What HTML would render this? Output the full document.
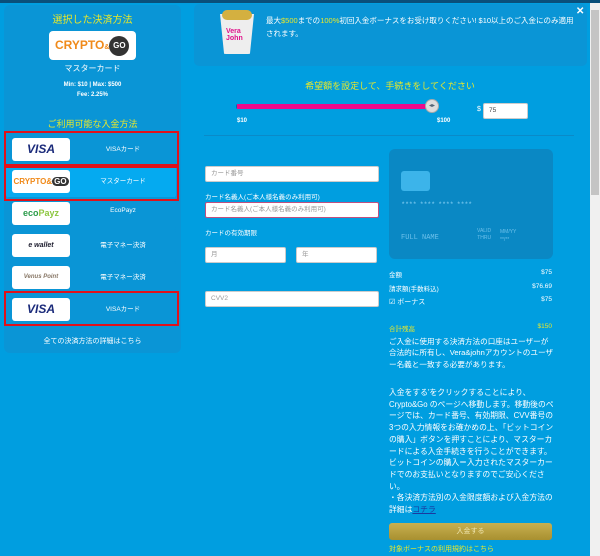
<!DOCTYPE html>
<html><head><meta charset="utf-8"><style>
*{margin:0;padding:0;box-sizing:border-box}
body{width:600px;height:556px;background:#009ee0;font-family:"Liberation Sans","Noto Sans CJK JP",sans-serif;color:#fff;position:relative;overflow:hidden;font-size:7px}
.a{position:absolute}
.top{left:0;top:0;width:600px;height:3px;background:#0a4f7a}
.left{left:4px;top:5px;width:177px;height:348px;background:#0a95d6;border-radius:6px}
.y{color:#e8e82a}
.row{position:absolute;left:6px;width:170px;height:33px;background:#0a95d6;border-radius:3px}
.logo{position:absolute;left:6px;top:5px;width:58px;height:23px;background:#fff;border-radius:3px;font-weight:bold;text-align:center;line-height:23px}
.rl{position:absolute;left:72px;width:90px;text-align:center;top:10px;font-size:6.5px}
.red{position:absolute;border:2px solid #e0111a}
.inp{position:absolute;background:#fff;border:1px solid #ccc;border-radius:2px;height:16px;color:#999;font-size:6.5px;padding-left:5px;line-height:14px}
.lbl{position:absolute;font-size:6.5px}
.sb{left:590px;top:3px;width:10px;height:553px;background:#f0f0f0}
.p{position:absolute;left:389px;width:166px;font-size:7.6px;line-height:11.3px}
</style></head><body>
<div class="a top"></div>
<div class="a left"></div>
<div class="a y" style="left:4px;top:11px;width:177px;text-align:center;font-size:10px">選択した決済方法</div>
<div class="a" style="left:49px;top:31px;width:87px;height:29px;background:#fff;border-radius:4px;color:#f08a1a;font-weight:bold;font-size:12px;line-height:29px;padding-left:6px">CRYPTO<span style="font-size:7px">&amp;</span><span style="display:inline-block;width:20px;height:20px;border-radius:10px;background:#333;color:#fff;font-size:8px;line-height:20px;text-align:center;vertical-align:middle">GO</span></div>
<div class="a" style="left:4px;top:63px;width:177px;text-align:center;font-size:8px">マスターカード</div>
<div class="a" style="left:4px;top:80px;width:177px;text-align:center;font-size:6px;line-height:10px;font-weight:bold">Min: $10 | Max: $500<br>Fee: 2.25%</div>
<div class="a y" style="left:4px;top:117px;width:177px;text-align:center;font-size:9px">ご利用可能な入金方法</div>
<div class="row" style="top:133px"><div class="logo" style="color:#1a2a7a;font-size:12px;font-style:italic">VISA</div><div class="rl">VISAカード</div></div>
<div class="row" style="top:165px;background:#05aaf0"><div class="logo" style="color:#f08a1a;font-size:8px">CRYPTO&amp;<span style="background:#333;color:#fff;border-radius:6px;padding:0 2px">GO</span></div><div class="rl">マスターカード</div></div>
<div class="row" style="top:197px"><div class="logo" style="color:#2a9a4a;font-size:9px">eco<span style="color:#8cc63f">Payz</span></div><div class="rl">EcoPayz</div></div>
<div class="row" style="top:229px"><div class="logo" style="color:#223;font-size:7px;font-style:italic">e wallet</div><div class="rl">電子マネー決済</div></div>
<div class="row" style="top:261px"><div class="logo" style="color:#876;font-size:6px;font-style:italic">Venus Point</div><div class="rl">電子マネー決済</div></div>
<div class="row" style="top:293px"><div class="logo" style="color:#1a2a7a;font-size:12px;font-style:italic">VISA</div><div class="rl">VISAカード</div></div>
<div class="red" style="left:4px;top:131px;width:175px;height:35px"></div>
<div class="red" style="left:4px;top:166px;width:175px;height:35px"></div>
<div class="red" style="left:4px;top:291px;width:175px;height:35px"></div>
<div class="a" style="left:4px;top:336px;width:177px;text-align:center;font-size:7px">全ての決済方法の詳細はこちら</div>

<div class="a" style="left:194px;top:4px;width:393px;height:62px;background:#0a95d6;border-radius:5px"></div>
<div class="a" style="left:220px;top:14px;width:34px;height:40px;background:#eee;border-radius:0 0 6px 6px;clip-path:polygon(0 0,100% 0,88% 100%,12% 100%)"></div>
<div class="a" style="left:222px;top:10px;width:30px;height:10px;background:#d4b040;border-radius:5px"></div>
<div class="a" style="left:226px;top:28px;color:#e0108a;font-size:7px;font-weight:bold">Vera<br>John</div>
<div class="a" style="left:266px;top:14px;width:310px;font-size:7.5px;line-height:13px">最大<span class="y">$500</span>までの<span class="y">100%</span>初回入金ボーナスをお受け取りください! $10以上のご入金にのみ適用されます。</div>
<div class="a" style="left:576px;top:6px;font-size:10px;font-weight:bold">✕</div>
<div class="a y" style="left:190px;top:79px;width:400px;text-align:center;font-size:9px">希望額を設定して、手続きをしてください</div>
<div class="a" style="left:236px;top:104px;width:200px;height:5px;background:#0a6fa0;border-radius:2px"></div>
<div class="a" style="left:237px;top:104px;width:194px;height:5px;background:#ec0a8c"></div>
<div class="a" style="left:425px;top:99px;width:14px;height:14px;border-radius:7px;background:#ddd;border:1px solid #aaa;font-size:6px;color:#567;text-align:center;line-height:12px">◂▸</div>
<div class="a" style="left:237px;top:118px;font-size:6px;font-weight:bold">$10</div>
<div class="a" style="left:437px;top:118px;font-size:6px;font-weight:bold">$100</div>
<div class="a" style="left:477px;top:106px;font-size:7px">$</div>
<div class="inp" style="left:483px;top:103px;width:45px;color:#444">75</div>
<div class="a" style="left:204px;top:135px;width:370px;height:1px;background:#0a8ac8"></div>

<div class="inp" style="left:205px;top:166px;width:174px">カード番号</div>
<div class="lbl" style="left:205px;top:191px">カード名義人(ご本人様名義のみ利用可)</div>
<div class="inp" style="left:205px;top:202px;width:174px;border-color:#c05080">カード名義人(ご本人様名義のみ利用可)</div>
<div class="lbl" style="left:205px;top:227px">カードの有効期限</div>
<div class="inp" style="left:205px;top:247px;width:81px">月</div>
<div class="inp" style="left:296px;top:247px;width:81px">年</div>
<div class="inp" style="left:205px;top:291px;width:174px">CVV2</div>

<div class="a" style="left:389px;top:149px;width:164px;height:110px;background:#0a88c4;border-radius:6px"></div>
<div class="a" style="left:401px;top:171px;width:29px;height:20px;background:#3cb4ea;border-radius:3px"></div>
<div class="a" style="left:402px;top:202px;color:#6cc0ea;font-size:6px;letter-spacing:1.5px;font-weight:bold">**** **** **** ****</div>
<div class="a" style="left:401px;top:234px;color:#6cc0ea;font-size:7px;font-family:'Liberation Mono',monospace">FULL NAME</div>
<div class="a" style="left:477px;top:228px;color:#6cc0ea;font-size:5px;line-height:7px;text-align:right">VALID<br>THRU</div>
<div class="a" style="left:500px;top:228px;color:#6cc0ea;font-size:5px;line-height:8px">MM/YY<br>**/**</div>

<div class="a" style="left:389px;top:269px;font-size:6.5px">金額</div><div class="a" style="left:520px;top:269px;width:32px;text-align:right;font-size:6.5px">$75</div>
<div class="a" style="left:389px;top:283px;font-size:6.5px">請求額(手数料込)</div><div class="a" style="left:510px;top:283px;width:42px;text-align:right;font-size:6.5px">$76.69</div>
<div class="a" style="left:389px;top:297px;font-size:7px">☑ ボーナス</div><div class="a" style="left:520px;top:296px;width:32px;text-align:right;font-size:6.5px">$75</div>
<div class="a y" style="left:389px;top:323px;font-size:6.5px">合計残高</div><div class="a y" style="left:520px;top:323px;width:32px;text-align:right;font-size:6.5px">$150</div>
<div class="p" style="top:336px">ご入金に使用する決済方法の口座はユーザーが合法的に所有し、Vera&amp;johnアカウントのユーザー名義と一致する必要があります。</div>
<div class="p" style="top:387px;font-size:7.8px;line-height:11.7px">入金をする'をクリックすることにより、Crypto&amp;Go のページへ移動します。移動後のページでは、カード番号、有効期限、CVV番号の3つの入力情報をお確かめの上、「ビットコインの購入」ボタンを押すことにより、マスターカードによる入金手続きを行うことができます。ビットコインの購入＝入力されたマスターカードでのお支払いとなりますのでご安心ください。<br>・各決済方法別の入金限度額および入金方法の詳細は<span style="color:#1a3aa0;text-decoration:underline">コチラ</span></div>
<div class="a" style="left:389px;top:523px;width:163px;height:17px;background:linear-gradient(#c8b050,#a89030);border-radius:3px;text-align:center;line-height:17px;color:#f0e6b0;font-size:7px">入金する</div>
<div class="a y" style="left:389px;top:544px;font-size:7px">対象ボーナスの利用規約はこちら</div>
<div class="a sb"></div>
<div class="a" style="left:591px;top:10px;width:8px;height:185px;background:#c4c4c4"></div>
</body></html>
